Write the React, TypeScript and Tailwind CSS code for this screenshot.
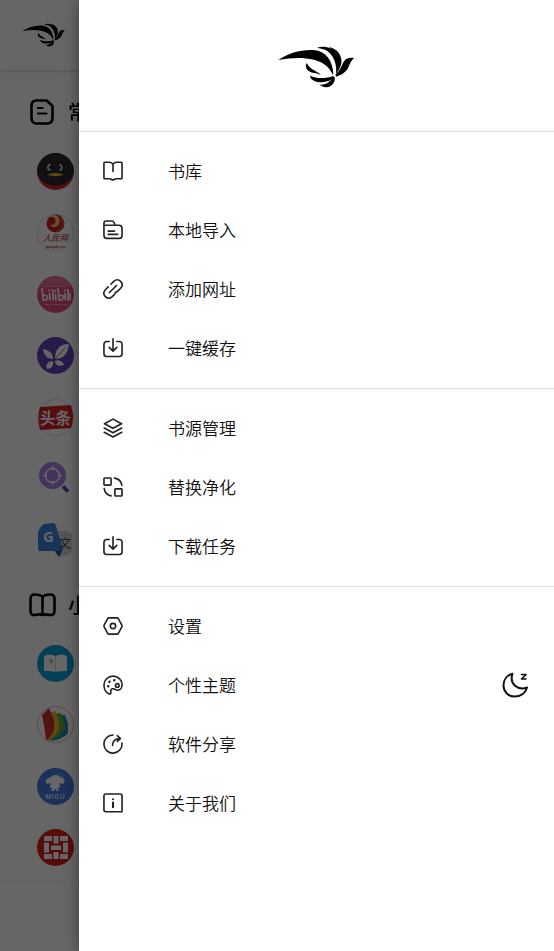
import type { ReactNode } from "react";

const cjk = "font-['Noto_Sans_CJK_SC',sans-serif]";

function Logo({ className }: { className: string }) {
  return (
    <svg viewBox="0 0 240 144" className={className} fill="#000">
      <path d="M7 54C38 33 75 22 112 24C150 27 170 56 172 96L170 98C162 78 145 61 114 53C78 45 45 47 7 54Z" />
      <path d="M122 18C135 13 150 13 165 20L160 14L173 20C190 28 199 47 196 64C193 78 186 88 180 95C183 70 176 46 155 28C145 21 134 19 122 18Z" />
      <path d="M234 48C219 46 208 50 202 61C195 76 192 86 178 98L181 104C199 98 212 89 217 76C222 63 226 56 234 48Z" />
      <path d="M92 63C84 77 96 91 114 93C122 94 129 97 134 99C127 88 102 84 92 63Z" />
      <path d="M102 101C120 110 149 111 171 102L175 106C163 119 145 122 127 120C112 117 103 111 102 101Z" />
      <path d="M131 128C149 128 163 120 169 107L176 104C178 119 171 131 156 135C145 137 137 133 131 128Z" />
    </svg>
  );
}

function Icon({ children }: { children: ReactNode }) {
  return (
    <svg
      viewBox="-.6 -.6 25.200 25.200"
      className="size-6 shrink-0"
      fill="none"
      stroke="#222"
      strokeWidth="1.7"
      strokeLinecap="round"
      strokeLinejoin="round">
      {children}
    </svg>
  );
}

const icons: Record<string, ReactNode> = {
  book: (
    <path d="M12 12.500V5C11.200 3.400 9.800 2.800 8.500 2.800H3.300C2.800 2.800 2.500 3.100 2.500 3.600V19.400C2.500 19.900 2.800 20.200 3.300 20.200H8.500C10.200 20.200 10.700 21.500 12 21.500S13.800 20.200 15.500 20.200H20.700C21.200 20.200 21.500 19.900 21.500 19.400V3.600C21.500 3.100 21.200 2.800 20.700 2.800H15.500C14.200 2.800 12.800 3.400 12 5" />
  ),
  folder: (
    <>
      <path d="M2.500 7V5C2.500 3.400 3.300 2.600 4.700 2.600H11C12.200 2.600 13 3.300 13.500 4.800L14 6.800M2.500 7V17.500C2.500 19.800 3.800 20.800 5.500 20.800H18.500C20.300 20.800 21.500 19.600 21.500 17.500V10.500C21.500 8.200 20.300 7 18.300 7Z" />
      <path d="M7 13.200H13.500M7 16.600H17" />
    </>
  ),
  link: (
    <>
      <path d="M9.800 7L12.800 4C15.200 1.800 17.900 1.900 20 4S22.200 8.800 20 11.200L17 14.200C16.200 15 15.300 15.500 14.300 15.700" />
      <path d="M14.200 17L11.200 20C8.800 22.200 6.100 22.100 4 20S1.800 15.200 4 12.800L7 9.800" />
      <path d="M8.300 15.700L15.700 8.300" />
    </>
  ),
  save: (
    <>
      <path d="M8 5.200H5.500C3.500 5.200 2.500 6.400 2.500 8.200V17.700C2.500 19.900 3.700 20.900 5.500 20.900H18.500C20.300 20.900 21.500 19.900 21.500 17.700V8.200C21.500 6.400 20.500 5.200 18.500 5.200H16" />
      <path d="M12 2.300V15M8 11.300L12 15.300L16 11.300" />
    </>
  ),
  layers: (
    <>
      <path d="M12 2.700L21 7.500L12 12.300L3 7.500Z" />
      <path d="M2.800 12L12 17L21.200 12M2.800 16.500L12 21.500L21.200 16.500" />
    </>
  ),
  replace: (
    <>
      <rect x="2.500" y="2.500" width="7.500" height="7.500" rx=".8" />
      <rect x="14" y="14" width="7.500" height="7.500" rx=".8" />
      <path d="M13.500 2.700C17.500 3.200 20.500 6 21.300 10M2.700 13.500C3.300 17.500 6 20.600 10 21.300" />
    </>
  ),
  settings: (
    <>
      <path d="M7.800 3.500H16.200C16.900 3.500 17.300 3.700 17.600 4.300L21.300 11.200C21.600 11.700 21.600 12.300 21.300 12.800L17.600 19.700C17.300 20.300 16.900 20.500 16.200 20.500H7.800C7.100 20.500 6.700 20.300 6.400 19.700L2.700 12.800C2.400 12.300 2.400 11.700 2.700 11.200L6.400 4.300C6.700 3.700 7.100 3.500 7.800 3.500Z" />
      <circle cx="12" cy="12" r="2.800" />
    </>
  ),
  palette: (
    <>
      <path d="M12 2.700C6.500 2.700 2.500 7 2.500 12C2.500 16 4.500 20.300 8 21.300C9.300 21.700 10.200 20.900 9.800 19.500C9.200 17 10.300 15.600 12.500 16C14.500 16.500 15 17.500 17 17.500C19.700 17.500 21.500 14.800 21.500 11.500C21.500 6.500 17.300 2.700 12 2.700Z" />
      <circle cx="16.500" cy="12.500" r="1.900" />
      <path d="M7 13.300h.01M8.300 8.700h.01M13.300 7h.01" strokeWidth="2.600" />
    </>
  ),
  share: (
    <>
      <path d="M12 2.600A9.500 9.500 0 1 0 21.400 11" />
      <path d="M11.500 13.500C11.500 9 14 6.300 19.500 6.300M16.500 3.300L19.800 6.300L16.500 9.300" />
    </>
  ),
  about: (
    <>
      <path d="M4.500 2.600H19.500C20.700 2.600 21.500 3.300 21.500 4.600V21.200H4.500C3.300 21.200 2.500 20.400 2.500 19.200V4.600C2.500 3.300 3.300 2.600 4.500 2.600Z" />
      <path d="M12 11.500V16.500M12 8h.01" strokeWidth="2.200" />
    </>
  ),
};

const sections = [
  [
    { icon: "book", label: "书库" },
    { icon: "folder", label: "本地导入" },
    { icon: "link", label: "添加网址" },
    { icon: "save", label: "一键缓存" },
  ],
  [
    { icon: "layers", label: "书源管理" },
    { icon: "replace", label: "替换净化" },
    { icon: "save", label: "下载任务" },
  ],
  [
    { icon: "settings", label: "设置" },
    { icon: "palette", label: "个性主题", moon: true },
    { icon: "share", label: "软件分享" },
    { icon: "about", label: "关于我们" },
  ],
];

// Site badges, all drawn on a 37x37 grid
const badges: Record<string, ReactNode> = {
  qq: (
    <>
      <circle cx="18.500" cy="18.500" r="18.500" fill="#d0232f" />
      <path d="M0 18.500A18.500 18.500 0 0 1 37 18.500C35 28 28 32.500 18.500 32.500S2 28 0 18.500Z" fill="#2c2c2e" />
      <path d="M13.500 11.500C10 12 10 17 13.500 17M22.500 11.500C25.500 12 25.500 17 22.500 17" stroke="#eee" strokeWidth="1.400" fill="none" />
      <path d="M10 21.500Q18.500 18.500 27 21.500Q18.500 25 10 21.500Z" fill="#e5b61c" />
    </>
  ),
  people: (
    <>
      <circle cx="18.500" cy="18.500" r="18" fill="#fff" stroke="#ccc" strokeWidth=".7" />
      <circle cx="18.500" cy="9.500" r="9" fill="#c91f17" />
      <path d="M12 3C18 -2 25 3 22 10C20 14 15 14 13 11C18 12 21 6 16 3Z" fill="#fac08a" />
      <path d="M24 3C28 9 26 15 19 17" stroke="#ed8540" fill="none" />
      <text x="18.500" y="27" textAnchor="middle" fontSize="8.300" fill="#b81d1d" fontStyle="italic" className={cjk}>人民网</text>
      <text x="18.500" y="33.800" textAnchor="middle" fontSize="4" fontWeight="700" fill="#b81d1d" className="font-['Liberation_Sans',sans-serif]">people.cn</text>
    </>
  ),
  bili: (
    <>
      <circle cx="18.500" cy="18.500" r="18.500" fill="#e34f7d" />
      <path d="M2 10.500A18.500 18.500 0 0 1 35 10.500Z" fill="#ec7095" />
      <path d="M6 10.500H31M7 28.500H31" stroke="#f4a4bc" strokeWidth=".7" />
      <g stroke="#fff" strokeWidth="1.700" fill="none">
        <path d="M5 12L6.200 24C12 25 12 18 6.500 19.500M12.500 17L13.200 24.500M15.500 13L16.500 24.500M18.500 17.500L19 24.500M21 12L22.200 24C28 25 28 18 22.500 19.500M28 17L28.500 24.500M31 13V24.500M33 17V24.500" />
        <path d="M12 13.500V15.500M18.300 14V16M27.700 13.500V15.500" />
      </g>
    </>
  ),
  leaf: (
    <>
      <circle cx="18.500" cy="18.500" r="18.500" fill="#6442b8" />
      <path d="M18 22C18 13 22 7 32 7C31 17 26 22 18 22Z" fill="#fff" />
      <path d="M16 22C10 22 7 18 6 12C12 13 16 16 16 22ZM16 24C17 29 14 32 10 32C8 28 11 24 16 24ZM18 24C23 22 26 25 27 28C22 30 18 28 18 24Z" fill="#fff" />
      <path d="M18 22L28 11" stroke="#6442b8" strokeWidth=".8" />
    </>
  ),
  toutiao: (
    <>
      <circle cx="18.500" cy="18.500" r="18" fill="#fff" stroke="#ccc" strokeWidth=".7" />
      <path d="M3 8L34 6Q38 18 34 29L3 31Q0 18 3 8Z" fill="#d92127" />
      <text x="18.500" y="24.500" textAnchor="middle" fontSize="15.500" fontWeight="700" fill="#fff" className={cjk}>头条</text>
    </>
  ),
  search: (
    <>
      <circle cx="15.500" cy="15.500" r="13.500" fill="#aa7fe4" />
      <circle cx="15.500" cy="15.500" r="7" fill="none" stroke="#fff" strokeWidth="1.500" />
      <path d="M15.500 6V10M15.500 21V25M6 15.500H10M21 15.500H25" stroke="#fff" strokeWidth="1.500" />
      <path d="M26 26.500L31 31.500" stroke="#6b34ba" strokeWidth="3.500" />
    </>
  ),
  translate: (
    <>
      <path d="M18 9H30Q36 10 35 18V27Q35 33 24 35L17 28Z" fill="#d5d8dc" />
      <path d="M17 28L26 27L22 35Z" fill="#274c9c" />
      <path d="M7 2L16 1Q18 1 19 4L26 27L22 29H2Q1 29 1 26V13Q1 6 7 2Z" fill="#4180dd" />
      <text x="11.500" y="20" textAnchor="middle" fontSize="15" fontWeight="700" fill="#fff" className="font-['Open_Sans',sans-serif]">G</text>
      <text x="28" y="26" textAnchor="middle" fontSize="12.500" fill="#4a5056" className={cjk}>文</text>
    </>
  ),
  reader: (
    <>
      <circle cx="18.500" cy="18.500" r="18.500" fill="#0ba1d4" />
      <path d="M7 11Q13 8 18.500 11Q24 8 30 11V26Q24 25.500 18.500 27Q13 25.500 7 26Z" fill="#fff" />
      <path d="M18.500 11V27" stroke="#b9d7e3" />
      <path d="M12 14L15.500 15.500L14.500 18.500M12 16L15 17.500" stroke="#408da9" strokeWidth=".8" fill="none" />
    </>
  ),
  pages: (
    <>
      <circle cx="18.500" cy="18.500" r="18" fill="#fff" stroke="#df8f8f" strokeWidth=".7" />
      <path d="M20 10L28 9L31 18V27Q26 33 15 35Z" fill="#1788bf" />
      <path d="M17 8L24 7L28 17V24Q23 31 12 35Z" fill="#5da936" />
      <path d="M14 6L19 5L22 16V24Q18 31 10 35Z" fill="#e5b52a" />
      <path d="M5 9L12 2L17 14V23Q16 30 9 34Q8 24 5 9Z" fill="#d0312b" />
    </>
  ),
  migu: (
    <>
      <circle cx="18.500" cy="18.500" r="18.500" fill="#4779df" />
      <path d="M11 10Q14 10 15 8Q18 6 22 8Q23 10 26 10Q29 13 26 16L22.500 15L23 19L20.500 21L22.500 23H19.500L18 21L16.500 23H13.500L15.500 21L13 19L13.500 15L10 16Q7 13 11 10Z" fill="#fff" />
      <path d="M21 7L23 5M24 8.500L26 8" stroke="#fff" strokeWidth=".8" />
      <text x="18.500" y="31" textAnchor="middle" fontSize="6.300" fontWeight="500" letterSpacing=".8" fill="#fff" className="font-['Inter',sans-serif]">MIGU</text>
    </>
  ),
  grid: (
    <>
      <circle cx="18.500" cy="18.500" r="18.500" fill="#d6201c" />
      <path d="M7 7H15V12H7ZM16.500 7H21.500V14.500H16.500ZM23 7H31V12H23ZM7 13.500H12V23.500H7ZM14 16.500H24V21H14ZM26 13.500H31V23.500H26ZM7 25H15V30H7ZM16.500 23H21.500V30H16.500ZM23 25H31V30H23Z" fill="#fff" />
    </>
  ),
};

function Badges({ names }: { names: string[] }) {
  return (
    <>
      {names.map((name) => (
        <div key={name} className="flex h-[61.5px] shrink-0 items-center pl-[37px]">
          <svg viewBox="0 0 37 37" className="size-[37px]">
            {badges[name]}
          </svg>
        </div>
      ))}
    </>
  );
}

function Home() {
  return (
    <div className="flex h-full flex-col bg-white">
      <header className="flex h-[71px] shrink-0 items-center border-b border-gray-200 pb-0.5 pl-[21px] shadow-sm">
        <Logo className="h-[27px] w-[45px]" />
      </header>
      <h2 className={`flex h-[69.5px] shrink-0 items-center gap-[13px] pt-3 pl-[29px] text-[20px] font-medium text-black ${cjk}`}>
        <svg viewBox="0 0 26 26" className="size-[26px]" fill="none" stroke="#000" strokeWidth="2.600" strokeLinejoin="round" strokeLinecap="round">
          <path d="M7.500 1.500H17.500L23.500 7V18.500C23.500 22.500 21.500 24.500 18 24.500H7.500C4 24.500 2.500 22.500 2.500 18.500V7C2.500 3.500 4 1.500 7.500 1.500Z" />
          <path d="M9 9H13.500M9 14.500H17.500" strokeWidth="2.200" />
        </svg>
        常
      </h2>
      <Badges names={["qq", "people", "bili", "leaf", "toutiao", "search", "translate"]} />
      <h2 className={`flex h-[61.5px] shrink-0 items-center gap-[11px] pt-1.5 pl-[29px] text-[20px] font-medium text-black ${cjk}`}>
        <svg viewBox="0 0 28 26" className="h-[26px] w-7" fill="none" stroke="#000" strokeWidth="2.600" strokeLinejoin="round">
          <path d="M13.500 5C12 3 9.500 2.500 5.500 2.500C3 2.500 1.500 4 1.500 6.500V19C1.500 22 3 23.500 6 23C9 22.300 11.500 22 13.500 23C15.500 22 18 22.300 21 23C24 23.500 25.500 22 25.500 19V6.500C25.500 4 24 2.500 21.500 2.500C17.500 2.500 15 3 13.500 5ZM13.500 5V23" />
        </svg>
        小
      </h2>
      <Badges names={["reader", "pages", "migu", "grid"]} />
      <footer className="mt-0.5 flex-1 border-t border-gray-100" />
    </div>
  );
}

export default function App() {
  return (
    <div className="relative h-[951px] w-full overflow-hidden">
      <Home />
      <div className="absolute inset-0 bg-black/60" />
      <aside className="absolute inset-y-0 right-0 left-[79px] flex flex-col bg-white shadow-[0_0_14px_rgba(0,0,0,0.4)]">
        <div className="flex h-[131px] shrink-0 items-center justify-center pt-px pr-px">
          <Logo className="h-12 w-20" />
        </div>
        {sections.map((items, i) => (
          <nav key={i} className="border-t border-[#dedede] pt-[9px] pb-[11px]">
            {items.map((item) => (
              <div key={item.label} className="flex h-[59px] items-center pr-[25px] pl-[22px]">
                <Icon>{icons[item.icon]}</Icon>
                <span className="ml-[43px] flex-1 font-['Noto_Sans_CJK_SC_DemiLight','Noto_Sans_CJK_SC',sans-serif] text-[17px] leading-6 font-[350] text-[#111]">
                  {item.label}
                </span>
                {item.moon && (
                  <svg viewBox="0 0 28 28" className="size-7" fill="none" stroke="#111" strokeWidth="2" strokeLinecap="round" strokeLinejoin="round">
                    <path d="M11.500 2.800C5.800 4.200 2.500 9 2.500 14.500C2.500 21 7.700 25.500 13.500 25.500C19.500 25.500 24.500 22 26 16.500C17 20 8 13 11.500 2.800Z" />
                    <path d="M20.500 3.500H25L20.500 8H25" strokeWidth="1.600" />
                  </svg>
                )}
              </div>
            ))}
          </nav>
        ))}
      </aside>
    </div>
  );
}
